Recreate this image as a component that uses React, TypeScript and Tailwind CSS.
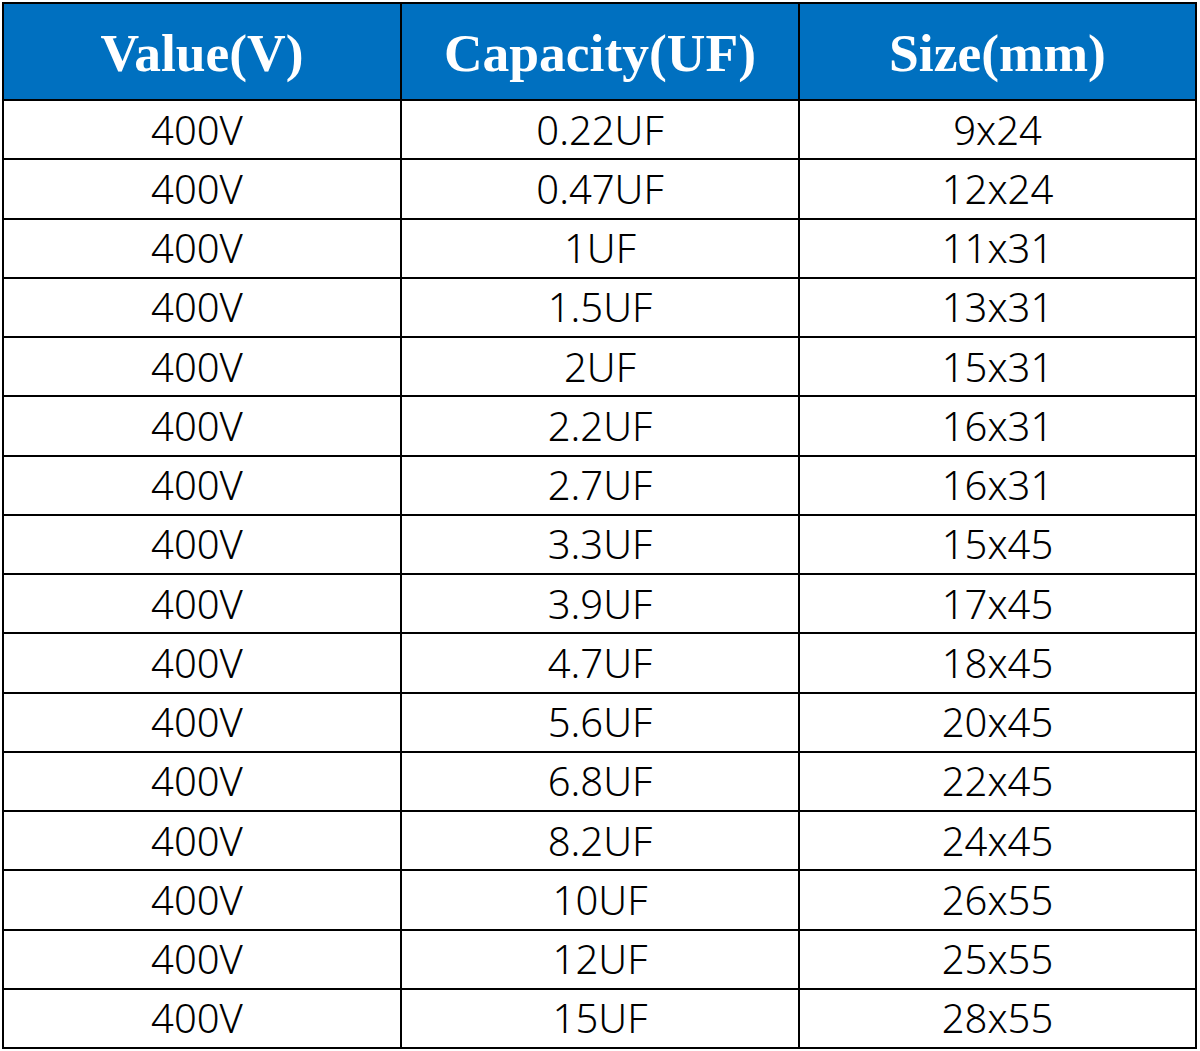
import React from "react";

const rows: [string, string, string][] = [
  ["400V", "0.22UF", "9x24"],
  ["400V", "0.47UF", "12x24"],
  ["400V", "1UF", "11x31"],
  ["400V", "1.5UF", "13x31"],
  ["400V", "2UF", "15x31"],
  ["400V", "2.2UF", "16x31"],
  ["400V", "2.7UF", "16x31"],
  ["400V", "3.3UF", "15x45"],
  ["400V", "3.9UF", "17x45"],
  ["400V", "4.7UF", "18x45"],
  ["400V", "5.6UF", "20x45"],
  ["400V", "6.8UF", "22x45"],
  ["400V", "8.2UF", "24x45"],
  ["400V", "10UF", "26x55"],
  ["400V", "12UF", "25x55"],
  ["400V", "15UF", "28x55"],
];

const headers = ["Value(V)", "Capacity(UF)", "Size(mm)"];

export default function App() {
  return (
    <div className="w-[1200px] h-[1051px] bg-white pt-[2px] pl-[2px]">
      <div className="w-[1195px] h-[1047px] bg-black p-[2px] grid grid-cols-[396px_396px_395px] grid-rows-[95px_repeat(16,1fr)] gap-[2px]">
        {headers.map((h) => (
          <div
            key={h}
            className="bg-[#0070c0] text-white flex items-center justify-center font-bold text-[53.5px] leading-none pt-[4px]"
            style={{ fontFamily: '"Liberation Serif", "Times New Roman", serif' }}
          >
            {h}
          </div>
        ))}
        {rows.map((r, i) =>
          r.map((c, j) => (
            <div
              key={`${i}-${j}`}
              className={`bg-white text-black flex items-center justify-center text-[40px] font-light leading-none ${j === 0 ? "pr-[10px]" : ""}`}
              style={{ fontFamily: '"Noto Sans", sans-serif' }}
            >
              {c}
            </div>
          ))
        )}
      </div>
    </div>
  );
}
